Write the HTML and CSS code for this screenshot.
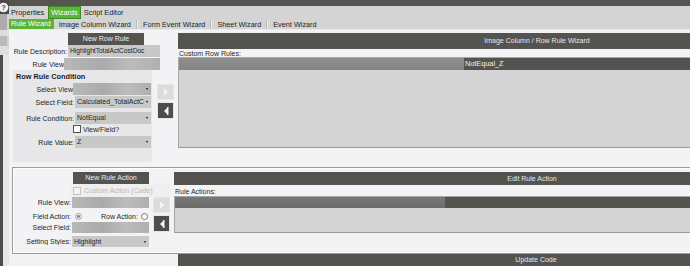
FILE: index.html
```html
<!DOCTYPE html>
<html>
<head>
  <meta charset="utf-8">
  <meta name="viewport" content="width=device-width, initial-scale=1">
  <link rel="stylesheet" href="styles.css">
</head>
<body>
  <div class="sidebar">
    <div class="help">
      <svg width="9" height="14" viewBox="0 0 9 14">
        <circle cx="3.5" cy="7.5" r="4.8" fill="#f0f0f0"/>
        <text x="3.5" y="10.2" font-size="7.5" font-weight="bold" text-anchor="middle" fill="#4d4b49" font-family="Liberation Sans, sans-serif">?</text>
      </svg>
    </div>
    <div class="side-block"></div>
    <div class="side-gap"></div>
    <div class="side-block short"></div>
    <div class="side-gap tall"></div>
    <div class="side-rail"></div>
  </div>

  <div class="frame">
    <div class="topbar"></div>

    <div class="tabs">
      <span class="tab">Properties</span>
      <span class="tab active">Wizards</span>
      <span class="tab">Script Editor</span>
    </div>

    <div class="subtabs">
      <span class="subtab active">Rule Wizard</span>
      <span class="subtab">Image Column Wizard</span>
      <span class="sep"></span>
      <span class="subtab">Form Event Wizard</span>
      <span class="sep"></span>
      <span class="subtab">Sheet Wizard</span>
      <span class="sep"></span>
      <span class="subtab">Event Wizard</span>
    </div>

    <div class="content">
      <!-- Row rule section -->
      <div class="row-rule">
        <div class="rule-form">
          <div class="btn-dark new-rule">New Row Rule</div>
          <div class="field-row">
            <span class="field-label desc-label">Rule Description:</span>
            <span class="input desc-input">HighlightTotalActCostDoc</span>
          </div>
          <div class="field-row gap-1">
            <span class="field-label view-label">Rule View</span>
            <span class="input blurred view-input"></span>
          </div>

          <div class="condition-wrap">
            <div class="condition">
              <div class="group-title">Row Rule Condition</div>
              <div class="field-row gap-2">
                <span class="field-label cut-label">Select View</span>
                <span class="input blurred dropdown wide"></span>
              </div>
              <div class="field-row gap-1">
                <span class="field-label">Select Field:</span>
                <span class="input dropdown">Calculated_TotalActC</span>
              </div>
              <div class="field-row gap-4">
                <span class="field-label">Rule Condition:</span>
                <span class="input dropdown">NotEqual</span>
              </div>
              <div class="check-row">
                <span class="checkbox"></span>
                <span>View/Field?</span>
              </div>
              <div class="field-row gap-3">
                <span class="field-label">Rule Value:</span>
                <span class="input dropdown">Z</span>
              </div>
            </div>

            <div class="arrows">
              <div class="arrow-btn disabled">
                <svg width="6" height="8" viewBox="0 0 6 8"><polygon points="1,0 5,4 1,8" fill="#f4f4f4"/></svg>
              </div>
              <div class="arrow-btn">
                <svg width="6" height="8" viewBox="0 0 6 8"><polygon points="5,0 1,4 5,8" fill="#f4f4f4"/><rect x="4" y="0" width="1.5" height="8" fill="#f4f4f4"/></svg>
              </div>
            </div>
          </div>
        </div>

        <div class="wizard-panel">
          <div class="panel-header rules-header">Image Column / Row Rule Wizard</div>
          <div class="list-label">Custom Row Rules:</div>
          <div class="list rules-list">
            <div class="list-row">
              <span class="cell-blur rules-blur"></span>
              <span class="cell-text">NotEqual_Z</span>
            </div>
          </div>
        </div>
      </div>

      <!-- Rule action section -->
      <div class="action-box">
        <div class="action-left">
          <div class="btn-dark new-action">New Rule Action</div>
          <div class="custom-row">
            <span class="checkbox off"></span>
            <span>Custom Action (Code)</span>
          </div>
          <div class="action-body">
            <div class="action-form">
              <div class="field-row small">
                <span class="field-label">Rule View:</span>
                <span class="input blurred"></span>
              </div>
              <div class="field-row small gap-3">
                <span class="field-label">Field Action:</span>
                <span class="radio checked"></span>
                <span class="radio-label">Row Action:</span>
                <span class="radio"></span>
              </div>
              <div class="field-row small">
                <span class="field-label">Select Field:</span>
                <span class="input blurred"></span>
              </div>
              <div class="field-row small gap-3">
                <span class="field-label">Setting Styles:</span>
                <span class="input dropdown">Highlight</span>
              </div>
            </div>
            <div class="arrows small">
              <div class="arrow-btn disabled">
                <svg width="6" height="8" viewBox="0 0 6 8"><polygon points="1,0 5,4 1,8" fill="#f4f4f4"/></svg>
              </div>
              <div class="arrow-btn">
                <svg width="6" height="8" viewBox="0 0 6 8"><polygon points="5,0 1,4 5,8" fill="#f4f4f4"/><rect x="4" y="0" width="1.5" height="8" fill="#f4f4f4"/></svg>
              </div>
            </div>
          </div>
        </div>

        <div class="action-right">
          <div class="panel-header small action-header">Edit Rule Action</div>
          <div class="list-label tall">Rule Actions:</div>
          <div class="list actions-list">
            <div class="list-row small">
              <span class="cell-blur actions-blur"></span>
              <span class="cell-text"></span>
            </div>
          </div>
        </div>
      </div>

      <div class="footer-bar">Update Code</div>
    </div>
  </div>
</body>
</html>
```

FILE: styles.css
```css
/* Base styles */
body {
  margin: 0;
  width: 690px;
  height: 266px;
  overflow: hidden;
  display: flex;
  font: 7px "Liberation Sans", Arial, sans-serif;
  color: #1e1e1e;
  background: #f3f3f5;
}

/* Left strip */
.sidebar {
  width: 9px;
  flex: none;
  display: flex;
  flex-direction: column;
  background: #dedede;
}

.help {
  height: 14px;
  background: #4d4b49;
}

.help svg {
  display: block;
}

.side-block {
  height: 16px;
  background: #acacac;
  border-right: 2px solid #d2d2d2;
}

.side-block.short {
  height: 10px;
  background: #b9b9b9;
}

.side-gap {
  height: 6px;
}

.side-gap.tall {
  height: 9px;
}

.side-rail {
  flex: 1;
  border-left: 3px solid #4f4d4b;
  background: #e6e6e6;
}

/* Main frame */
.frame {
  width: 681px;
  flex: none;
  display: flex;
  flex-direction: column;
}

.topbar {
  height: 6px;
  background: #565451;
}

.tabs {
  height: 13px;
  display: flex;
  align-items: center;
  background: #d4d4d4;
  font-size: 7.3px;
}

.tab {
  padding: 0 2px;
  white-space: nowrap;
}

.tab.active {
  margin: 0 1px 0 2px;
  padding: 1px 2px;
  color: #fff;
  background: #5db537;
  border: 1px solid #3e8a26;
}

.subtabs {
  height: 10px;
  display: flex;
  align-items: center;
  gap: 4px;
  background: #d4d4d4;
  border-bottom: 1px solid #ebebeb;
  font-size: 7.3px;
}

.subtab {
  padding: 0 1px;
  white-space: nowrap;
}

.subtab.active {
  height: 10px;
  line-height: 10px;
  padding: 0 3px 0 2px;
  color: #fff;
  background: #5db537;
}

.sep {
  width: 1px;
  height: 9px;
  background: #b9b9b9;
  border-right: 1px solid #ececec;
}

/* Content */
.content {
  flex: 1;
  display: flex;
  flex-direction: column;
  background: #f3f3f5;
}

.row-rule {
  height: 137px;
  display: flex;
}

.rule-form {
  width: 169px;
  flex: none;
  padding-top: 3px;
}

.btn-dark {
  height: 12px;
  line-height: 12px;
  text-align: center;
  color: #ececec;
  background: #555350;
  white-space: nowrap;
}

.new-rule {
  width: 76px;
  margin-left: 59px;
}

.field-row {
  height: 12px;
  display: flex;
  align-items: center;
}

.field-row.small {
  height: 11px;
}

.gap-1 { margin-top: 1px; }
.gap-2 { margin-top: 2px; }
.gap-3 { margin-top: 3px; }
.gap-4 { margin-top: 4px; }

.field-label {
  width: 59px;
  flex: none;
  padding-right: 1px;
  box-sizing: border-box;
  text-align: right;
  white-space: nowrap;
  overflow: hidden;
}

.view-label {
  width: 55px;
  padding-right: 0;
}

.cut-label {
  width: 57px;
  padding-right: 0;
}

.input {
  position: relative;
  width: 76px;
  height: 100%;
  flex: none;
  box-sizing: border-box;
  padding-left: 2px;
  line-height: 12px;
  background: #c8c8c8;
  white-space: nowrap;
  overflow: hidden;
}

.small .input {
  width: 77px;
  line-height: 11px;
}

.desc-input {
  width: 92px;
  font-size: 6.6px;
}

.view-input {
  width: 96px;
}

.input.wide {
  width: 78px;
}

.blurred {
  background: linear-gradient(90deg, #b8b8b8, #aaaaaa 40%, #bcbcbc 70%, #b0b0b0);
}

.dropdown {
  padding-right: 8px;
}

.dropdown::after {
  content: '';
  position: absolute;
  right: 3px;
  top: 50%;
  margin-top: -1px;
  border-left: 1.5px solid transparent;
  border-right: 1.5px solid transparent;
  border-top: 2px solid #111;
}

/* Row rule condition group */
.condition-wrap {
  display: flex;
}

.condition {
  width: 139px;
  height: 92px;
  margin-left: 4px;
  padding: 2px 0 0 3px;
  box-sizing: border-box;
  background: #e7e7e9;
  border-radius: 2px;
}

.group-title {
  height: 9px;
  line-height: 9px;
  font-weight: bold;
  font-size: 7.3px;
  color: #1a1a2e;
}

.check-row {
  height: 8px;
  margin-top: 1px;
  display: flex;
  align-items: center;
  gap: 2px;
  padding-left: 57px;
}

.checkbox {
  width: 6px;
  height: 6px;
  border: 1px solid #555;
  background: #fff;
}

.checkbox.off {
  border-color: #c4c4c4;
  background: #f4f4f4;
}

.arrows {
  width: 17px;
  margin: 14px 0 0 5px;
  display: flex;
  flex-direction: column;
  gap: 2px;
}

.arrow-btn {
  height: 17px;
  display: flex;
  align-items: center;
  justify-content: center;
  background: #4f4d4b;
  border: 1px solid #e6e6e6;
  box-sizing: border-box;
}

.arrow-btn.disabled {
  height: 16px;
  background: #dcdcdc;
}

.arrows.small {
  margin: 0 0 0 4px;
}

.wizard-panel {
  flex: 1;
  min-width: 0;
  padding-top: 3px;
}

.panel-header {
  height: 16px;
  line-height: 16px;
  text-align: center;
  color: #e6e6e6;
  background: #555350;
  white-space: nowrap;
}

.rules-header {
  padding-left: 206px;
}

.panel-header.small {
  height: 13px;
  line-height: 13px;
}

.action-header {
  padding-left: 200px;
}

.list-label {
  height: 8px;
  line-height: 9px;
  padding-left: 1px;
}

.list-label.tall {
  height: 11px;
  line-height: 14px;
}

.list {
  box-sizing: border-box;
  background: #d4d4d4;
  border: 1px solid #a6a6a6;
  border-right: none;
  border-bottom-color: #9a9a9a;
}

.rules-list {
  height: 91px;
}

.actions-list {
  height: 37px;
}

.list-row {
  height: 12px;
  display: flex;
  background: #555350;
}

.list-row.small {
  height: 11px;
}

.cell-blur {
  flex: none;
  background: linear-gradient(180deg, #8e8e8e, #848484);
}

.rules-blur {
  width: 285px;
}

.actions-blur {
  width: 270px;
  background: linear-gradient(180deg, #777, #6c6c6c);
}

.cell-text {
  padding-left: 1px;
  line-height: 12px;
  font-size: 7.3px;
  color: #f2f2f2;
}

/* Rule action box */
.action-box {
  height: 87px;
  margin-left: 3px;
  display: flex;
  box-sizing: border-box;
  border: 1px solid #9c9c9c;
  border-right: none;
  box-shadow: inset 1px 1px 0 #fff, inset 0 -1px 0 #fff;
}

.action-left {
  width: 161px;
  flex: none;
  padding-top: 4px;
}

.new-action {
  width: 76px;
  margin-left: 60px;
}

.custom-row {
  height: 13px;
  width: 100px;
  margin-left: 57px;
  display: flex;
  align-items: center;
  gap: 3px;
  padding-left: 3px;
  box-sizing: border-box;
  color: #b8b8b8;
  background: #efefef;
}

.action-body {
  display: flex;
}

.action-form {
  width: 136px;
  flex: none;
}

.radio {
  width: 5px;
  height: 5px;
  flex: none;
  border: 1px solid #777;
  border-radius: 50%;
  background: #fff;
}

.radio.checked {
  margin-left: 3px;
  border-color: #a4a4a4;
  background: radial-gradient(circle, #8c8c8c 0 1.3px, #f4f4f4 1.6px);
}

.radio-label {
  margin: 0 3px 0 19px;
  white-space: nowrap;
}

.action-right {
  flex: 1;
  min-width: 0;
  padding-top: 4px;
}

.footer-bar {
  height: 12px;
  margin-left: 169px;
  padding-left: 204px;
  line-height: 12px;
  text-align: center;
  color: #e6e6e6;
  background: #555350;
}
```
